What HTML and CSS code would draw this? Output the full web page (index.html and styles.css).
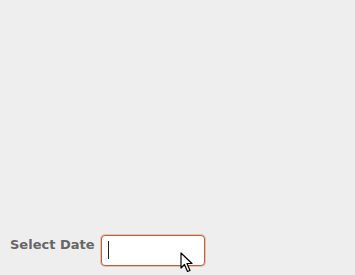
FILE: index.html
```html
<!DOCTYPE html>
<html lang="en">
<head>
    <meta charset="UTF-8">
    <title>Select Date</title>
    <link rel="stylesheet" href="styles.css">
</head>
<body>
    <div class="page">
        <div class="field">
            <label for="date">Select Date</label>
            <div class="input-box">
                <span class="caret"></span>
                <!-- pointeur de la souris -->
                <svg class="pointer" width="14" height="21" viewBox="0 0 14 21">
                    <path d="M1 1 L1 16 L4.5 12.5 L7.5 19.5 L10 18.5 L7 11.5 L12 11.5 Z" fill="#fff" stroke="#000" stroke-width="1.2" stroke-linejoin="round"/>
                </svg>
            </div>
        </div>
    </div>
</body>
</html>
```

FILE: styles.css
```css
body {
    margin: 0;
    background-color: #eeeeee;
    font-family: "DejaVu Sans", sans-serif;
}
.page {
    height: 275px;
    display: flex;
    flex-direction: column;
    justify-content: flex-end;
    padding: 0 10px 9px 10px;
    box-sizing: border-box;
}
.field {
    display: flex;
    align-items: center;
    gap: 6px;
}
label {
    font-size: 13px;
    font-weight: bold;
    color: #666666;
    margin-top: -12px;
}
.input-box {
    position: relative;
    width: 102px;
    height: 29px;
    background-color: #ffffff;
    border: 1px solid #c0603a;
    border-radius: 4px;
    box-shadow: 0 0 0 1px rgba(192, 96, 58, 0.3);
}
.caret {
    position: absolute;
    left: 6px;
    top: 5px;
    width: 1px;
    height: 18px;
    background-color: #222222;
}
.pointer {
    position: absolute;
    left: 78px;
    top: 16px;
}
```
